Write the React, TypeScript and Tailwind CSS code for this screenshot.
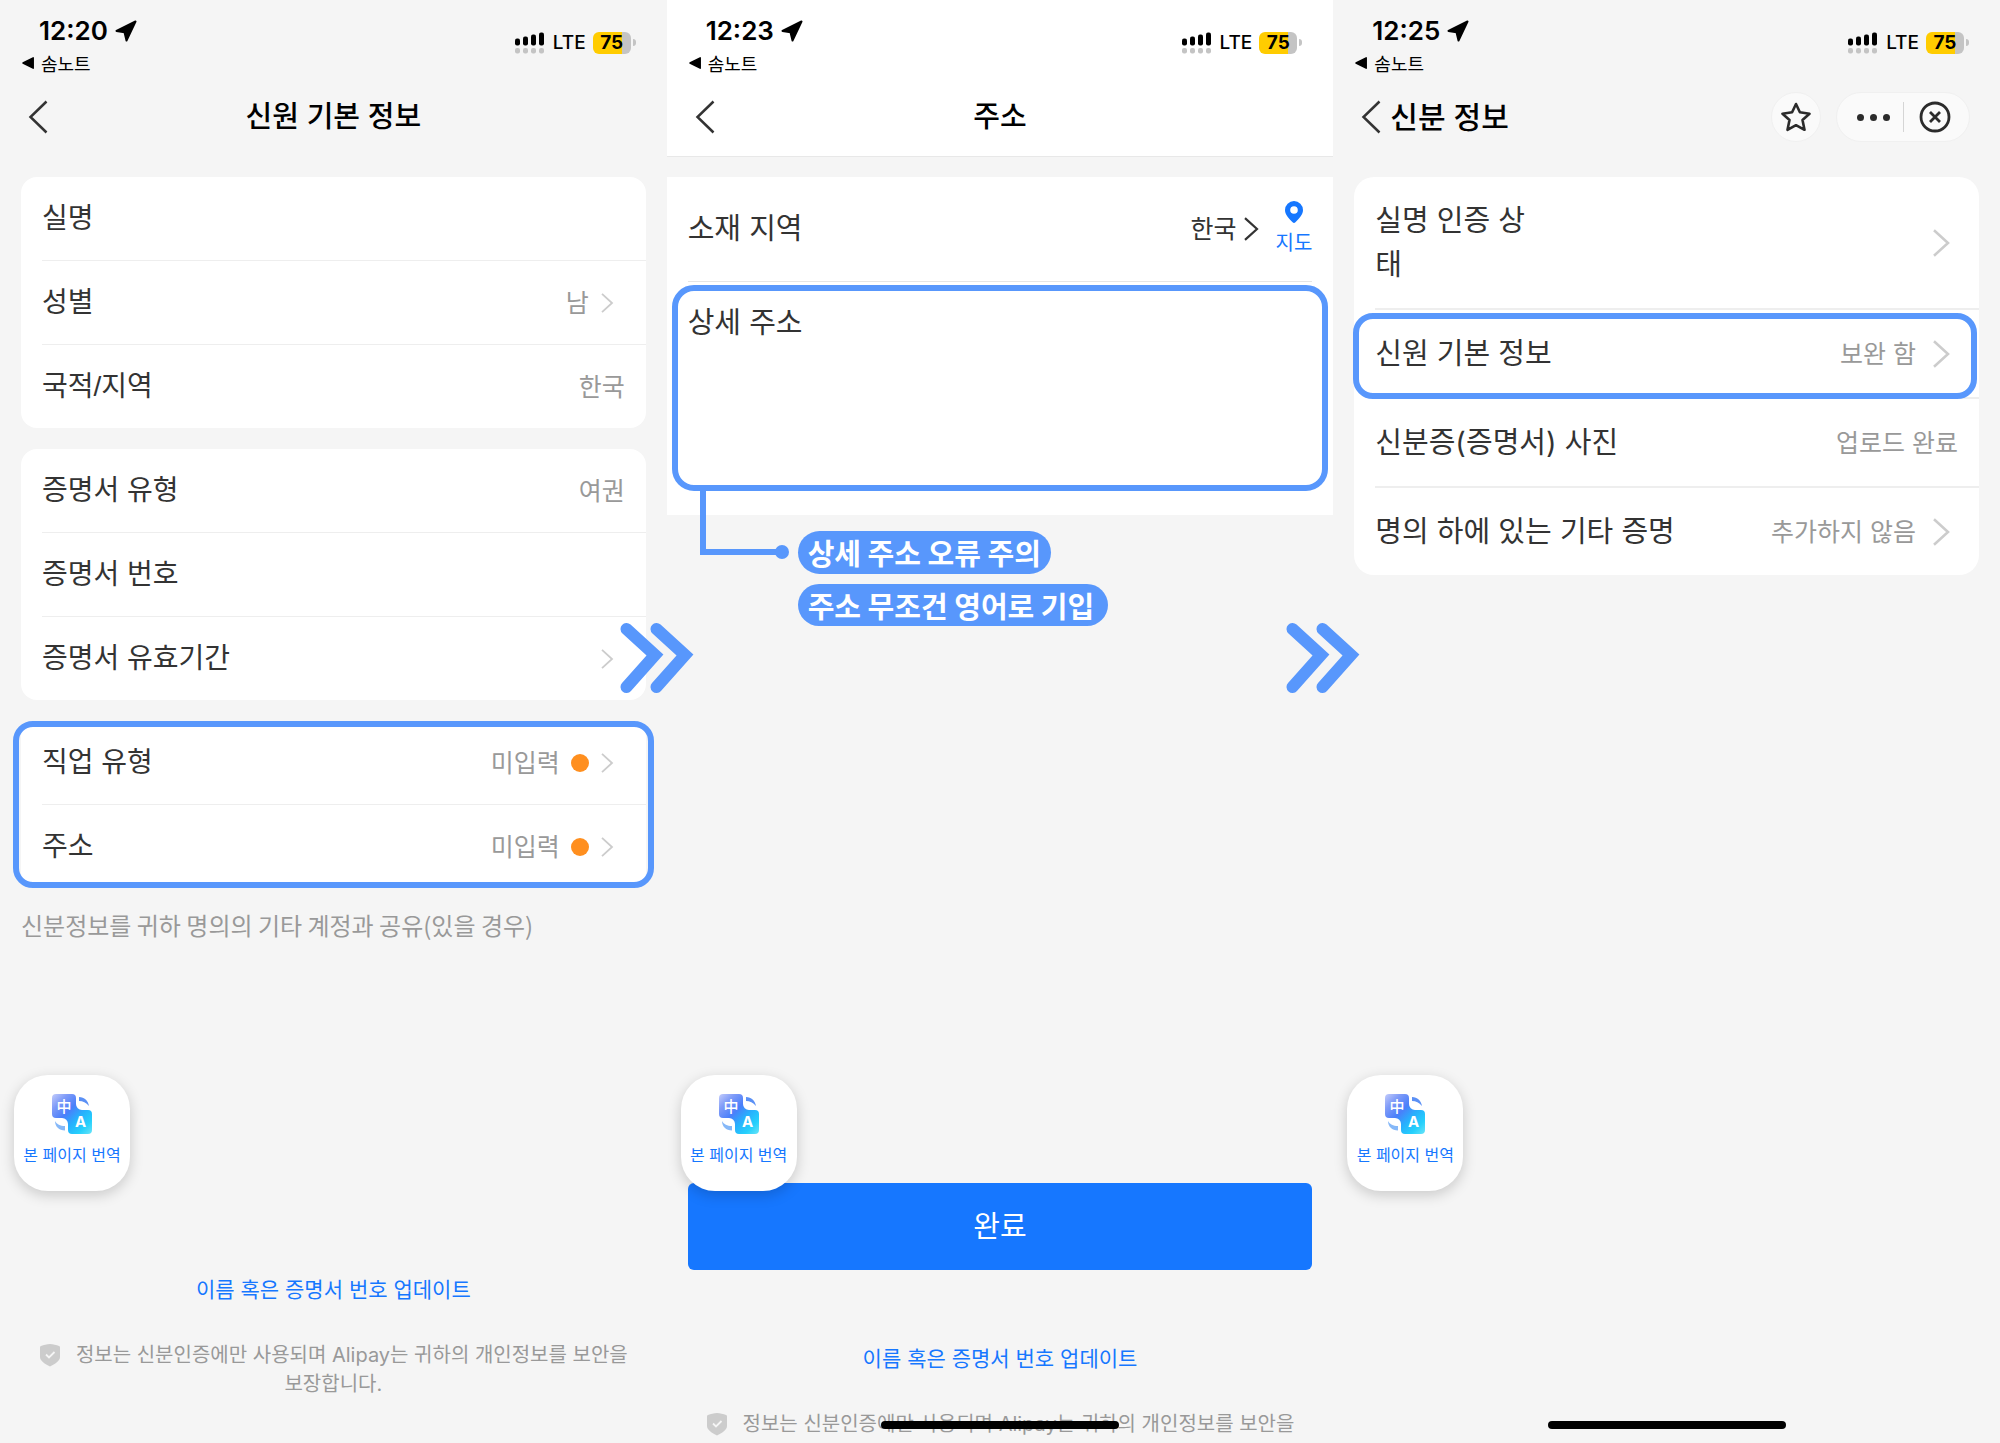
import React from "react";

const KR = "font-['Noto_Sans_CJK_KR',sans-serif]";
const SF = "font-['Inter','Noto_Sans_CJK_KR',sans-serif]";
const LABEL = "font-['Liberation_Sans','Noto_Sans_CJK_KR',sans-serif]";

function StatusBar({ time }: { time: string }) {
  return (
    <div className="flex h-[78px] items-start justify-between pr-[31px] pl-[21px] text-black">
      <div className="flex flex-col">
        <div className="mt-[15px] flex items-center gap-[7px] pl-[18px]">
          <span className="text-[26px] leading-8 font-semibold">{time}</span>
          <svg className="h-[22px] w-[22px]" viewBox="0 0 22 22" fill="currentColor" stroke="currentColor" strokeWidth="2" strokeLinejoin="round">
            <path d="M20.5 1.5 11.5 20.5 9.5 12.2 1.5 11Z" />
          </svg>
        </div>
        <button type="button" className="flex items-center gap-[6px]">
          <svg className="h-[14px] w-[14px]" viewBox="0 0 14 14" fill="currentColor" stroke="currentColor" strokeWidth="1.5" strokeLinejoin="round">
            <path d="M12.2 1.8v10.4L2 7Z" />
          </svg>
          <span className={`text-[18px] leading-8 ${KR}`}>솜노트</span>
        </button>
      </div>
      <div className="mt-[31px] flex h-[23px] items-center">
        <svg className="mr-2 h-[22px] w-[30px]" viewBox="0 0 30 22" aria-hidden="true">
          <g fill="#000">
            <rect x="0" y="6.500" width="5" height="7" rx="2" />
            <rect x="8" y="4.500" width="5" height="9" rx="2" />
            <rect x="16" y="2.500" width="5" height="11" rx="2" />
            <rect x="24" y="0.500" width="5" height="13" rx="2" />
          </g>
          <g fill="#c4c4c4">
            <rect x="0" y="16" width="5" height="5.500" rx="2" />
            <rect x="8" y="16" width="5" height="5.500" rx="2" />
            <rect x="16" y="16" width="5" height="5.500" rx="2" />
            <rect x="24" y="16" width="5" height="5.500" rx="2" />
          </g>
        </svg>
        <span className="mr-[7px] text-[19px] leading-6 font-medium">LTE</span>
        <span className="flex h-[22px] w-[38px] items-center justify-center rounded-[6px] bg-linear-to-r from-[#ffcc00] from-77% to-[#c4c4c4] to-77% text-[19px] leading-none font-bold">
          75
        </span>
        <span className="ml-[2px] h-[7px] w-[3px] rounded-r-full bg-[#c4c4c4]" />
      </div>
    </div>
  );
}

function BackButton() {
  return (
    <button type="button" aria-label="뒤로" className="flex items-center">
      <svg className="h-[34px] w-5" viewBox="0 0 20 34" fill="none" stroke="#333" strokeWidth="2.500">
        <path d="M18.500 1.500 2.500 17l16 15.500" />
      </svg>
    </button>
  );
}

function NavBar({ title }: { title: string }) {
  return (
    <header className="grid h-[78px] grid-cols-[1fr_auto_1fr] items-center px-7">
      <BackButton />
      <h1 className="text-[29px] leading-10 font-medium text-black">{title}</h1>
      <span />
    </header>
  );
}

function Chevron({ className }: { className: string }) {
  return (
    <svg className={className} viewBox="0 0 14 22" fill="none" stroke="currentColor" strokeWidth="2">
      <path d="M1.500 1 12.500 11 1.500 21" />
    </svg>
  );
}

function Card({ children, highlighted = false }: { children: React.ReactNode; highlighted?: boolean }) {
  return (
    <section className="relative rounded-2xl bg-white">
      {children}
      {highlighted && (
        <div className="pointer-events-none absolute -inset-x-2 inset-y-0 rounded-[20px] border-[6px] border-[#5897fc]" />
      )}
    </section>
  );
}

type RowProps = { label: string; value?: string; alert?: boolean; link?: boolean; last?: boolean };

function Row({ label, value, alert, link, last }: RowProps) {
  const Tag = link ? "button" : "div";
  return (
    <Tag
      className={`ml-[21px] flex w-[calc(100%-21px)] items-center justify-between pr-[21px] text-left ${
        last ? "h-[83px]" : "h-[84px] border-b border-[#eee]"
      }`}
    >
      <span className={`text-[28px] leading-10 text-[#333] ${LABEL}`}>{label}</span>
      <span className="flex items-center">
        {value && <span className="text-[25px] leading-9 text-[#999]">{value}</span>}
        {alert && <span className="ml-[11px] h-[18px] w-[18px] rounded-full bg-[#ff8f1f]" />}
        {link && <Chevron className="mr-[11px] ml-[11px] h-5 w-[14px] text-[#ccc]" />}
      </span>
    </Tag>
  );
}

function TranslateWidget() {
  return (
    <button
      type="button"
      className="absolute bottom-[252px] left-[14px] flex h-[116px] w-[116px] flex-col items-center rounded-[34px] bg-white pt-[19px] shadow-[0_4px_14px_rgba(0,0,0,0.18)]"
    >
      <svg className="h-10 w-10" viewBox="0 0 40 40" aria-hidden="true">
        <defs>
          <linearGradient id="tile" x1="0" y1="0" x2="1" y2="1">
            <stop offset="0" stopColor="#c3ccfb" />
            <stop offset="0.200" stopColor="#7f9bf8" />
            <stop offset="0.420" stopColor="#4a7ffa" />
            <stop offset="0.620" stopColor="#27b0fd" />
            <stop offset="0.820" stopColor="#25d0fc" />
            <stop offset="1" stopColor="#6be4f8" />
          </linearGradient>
        </defs>
        <path
          fill="url(#tile)"
          d="M4 0h16a4 4 0 0 1 4 4v6a6 6 0 0 0 6 6h6a4 4 0 0 1 4 4v16a4 4 0 0 1-4 4H20a4 4 0 0 1-4-4v-6a6 6 0 0 0-6-6H4a4 4 0 0 1-4-4V4a4 4 0 0 1 4-4Z"
        />
        <path fill="#5b90f5" d="M27 3c5.500 0 9 3.500 10 9-3-3.500-6-5-10-5Z" />
        <path fill="#86b8f8" d="M3 27c0 5.500 4 9.500 10 9.500V32c-5 0-8-1.500-10-5Z" />
        <text x="12" y="17.500" textAnchor="middle" fill="#fff" fontSize="15" fontWeight="500" fontFamily="Noto Sans CJK SC, sans-serif">
          中
        </text>
        <text x="28.500" y="33" textAnchor="middle" fill="#fff" fontSize="15" fontWeight="700" fontFamily="Inter, sans-serif">
          A
        </text>
      </svg>
      <span className="mt-[9px] text-base leading-6 whitespace-nowrap text-[#1677ff]">본 페이지 번역</span>
    </button>
  );
}

function UpdateLink() {
  return (
    <a href="#update" className="self-center text-[21px] leading-[30px] text-[#1677ff]">
      이름 혹은 증명서 번호 업데이트
    </a>
  );
}

function PrivacyNote({ children }: { children: React.ReactNode }) {
  return (
    <p className="px-6 text-center text-[20px] leading-[29px] break-keep text-[#999]">
      <svg className="mr-[15px] inline-block h-6 w-[22px] align-[-5px]" viewBox="0 0 22 24" aria-hidden="true">
        <path fill="#ccc" d="M11 1c3 0 6.500 1 9 2a1.500 1.500 0 0 1 1 1.500V14c0 4-5 7-10 9.500C6 21 1 18 1 14V4.500A1.500 1.500 0 0 1 2 3c2.500-1 6-2 9-2Z" />
        <path d="m7 11.500 3 3 5.500-5.500" fill="none" stroke="#f5f5f5" strokeWidth="1.800" />
      </svg>
      {children}
    </p>
  );
}

function HomeIndicator() {
  return <div className="absolute bottom-[14px] left-1/2 h-2 w-[238px] -translate-x-1/2 rounded-full bg-black" />;
}

function StepArrow() {
  return (
    <svg
      className="pointer-events-none absolute top-[622px] right-[-27px] z-10 h-[72px] w-[75px]"
      viewBox="0 0 75 72"
      fill="none"
      stroke="#5897fc"
      strokeWidth="12"
      strokeLinecap="round"
      aria-hidden="true"
    >
      <path d="M7.500 7 36 33 7.500 65" />
      <path d="M37.500 7 66 33 37.500 65" />
    </svg>
  );
}

function BasicInfoScreen() {
  return (
    <main className="relative flex h-screen flex-col">
      <StatusBar time="12:20" />
      <NavBar title="신원 기본 정보" />
      <div className="mt-[21px] flex flex-col gap-[21px] px-[21px]">
        <Card>
          <Row label="실명" />
          <Row label="성별" value="남" link />
          <Row label="국적/지역" value="한국" last />
        </Card>
        <Card>
          <Row label="증명서 유형" value="여권" />
          <Row label="증명서 번호" />
          <Row label="증명서 유효기간" link last />
        </Card>
        <Card highlighted>
          <Row label="직업 유형" value="미입력" alert link />
          <Row label="주소" value="미입력" alert link last />
        </Card>
        <p className={`text-[24px] leading-8 whitespace-nowrap text-[#999] ${KR}`}>
          신분정보를 귀하 명의의 기타 계정과 공유(있을 경우)
        </p>
      </div>
      <div className="mt-auto flex flex-col gap-9 pb-11">
        <UpdateLink />
        <PrivacyNote>정보는 신분인증에만 사용되며 Alipay는 귀하의 개인정보를 보안을 보장합니다.</PrivacyNote>
      </div>
      <TranslateWidget />
      <StepArrow />
    </main>
  );
}

function AddressScreen() {
  return (
    <main className="relative flex h-screen flex-col">
      <div className="border-b border-[#e8e8e8] bg-white">
        <StatusBar time="12:23" />
        <NavBar title="주소" />
      </div>
      <form className="relative mt-5 flex flex-col bg-white pb-6">
        <div className="mx-[21px] flex h-[105px] items-center justify-between border-b border-[#e5e5e5]">
          <span className="text-[29px] leading-10 text-[#333]">소재 지역</span>
          <div className="flex items-center gap-[17px]">
            <button type="button" className="flex items-center gap-[6px] text-[#333]">
              <span className="text-[25px] leading-9">한국</span>
              <Chevron className="h-6 w-4" />
            </button>
            <button type="button" className="flex flex-col items-center text-[#1677ff]">
              <svg className="h-[22px] w-[18px]" viewBox="0 0 18 22" fill="currentColor" aria-hidden="true">
                <path
                  fillRule="evenodd"
                  d="M9 0a9 9 0 0 1 9 9c0 4.500-3.500 8-7.600 12.200a2 2 0 0 1-2.800 0C3.500 17 0 13.500 0 9a9 9 0 0 1 9-9Zm0 5.200a3.800 3.800 0 1 0 0 7.600 3.800 3.800 0 0 0 0-7.600Z"
                />
              </svg>
              <span className="mt-[6px] text-[20px] leading-7">지도</span>
            </button>
          </div>
        </div>
        <div className="mx-[5px] mt-[3px] flex h-[206px] flex-col rounded-[22px] border-[6px] border-[#5897fc] px-[10px] pt-3">
          <label htmlFor="address" className="text-[29px] leading-10 text-[#333]">
            상세 주소
          </label>
          <textarea id="address" className="min-h-0 flex-1 resize-none text-[25px] outline-none" />
        </div>
      </form>
      <div className={`relative mt-4 flex flex-col items-start gap-[10px] pl-[131px] text-[29px] font-bold text-white ${KR}`}>
        <svg className="absolute -top-10 left-8 h-[72px] w-[91px]" viewBox="0 0 91 72" aria-hidden="true">
          <path d="M4 0v61h78" fill="none" stroke="#5897fc" strokeWidth="6" />
          <circle cx="83" cy="61" r="7" fill="#5897fc" />
        </svg>
        <p className="rounded-full bg-[#5897fc] px-[10px] leading-[43px]">상세 주소 오류 주의</p>
        <p className="rounded-full bg-[#5897fc] pr-[14px] pl-[10px] leading-[42px]">주소 무조건 영어로 기입</p>
      </div>
      <div className="mt-auto flex flex-col gap-9 pb-1">
        <button type="button" className="mx-[21px] mb-[38px] h-[87px] rounded-md bg-[#1677ff] text-[29px] text-white">
          완료
        </button>
        <UpdateLink />
        <PrivacyNote>정보는 신분인증에만 사용되며 Alipay는 귀하의 개인정보를 보안을</PrivacyNote>
      </div>
      <TranslateWidget />
      <HomeIndicator />
      <StepArrow />
    </main>
  );
}

type IdentityRowProps = { label: string; value?: string; link?: boolean; highlighted?: boolean; last?: boolean; tall?: boolean };

function IdentityRow({ label, value, link, highlighted, last, tall }: IdentityRowProps) {
  const Tag = link ? "button" : "div";
  return (
    <div className="relative pl-[21px]">
      <Tag
        className={`flex w-full items-center justify-between pr-[21px] text-left ${tall ? "h-[133px]" : last ? "h-[87px]" : "h-[89px]"} ${
          last ? "" : "border-b-2 border-[#eee]"
        }`}
      >
        <span className={`text-[29px] leading-[44px] text-[#333] ${tall ? "w-[165px] break-all" : ""}`}>{label}</span>
        <span className="flex items-center">
          {value && <span className="text-[25px] leading-9 text-[#999]">{value}</span>}
          {link && <Chevron className="mr-2 ml-4 h-[28px] w-[18px] text-[#ccc]" />}
        </span>
      </Tag>
      {highlighted && (
        <div className="pointer-events-none absolute -left-px top-[3px] right-[2px] bottom-0 rounded-[20px] border-[6px] border-[#5897fc]" />
      )}
    </div>
  );
}

function IdentityScreen() {
  return (
    <main className="relative flex h-screen flex-col">
      <StatusBar time="12:25" />
      <header className="flex h-[78px] items-center justify-between pr-[30px] pl-7">
        <div className="flex items-center gap-[9px]">
          <BackButton />
          <h1 className="text-[30px] leading-10 font-medium text-black">신분 정보</h1>
        </div>
        <div className="flex items-center gap-[15px]">
          <button type="button" aria-label="즐겨찾기" className="flex h-[50px] w-[50px] items-center justify-center rounded-full border border-[#f0f0f0] bg-[#fafafa]">
            <svg className="h-[30px] w-[30px]" viewBox="0 0 30 30" fill="none" stroke="#2b2b2b" strokeWidth="2.600" strokeLinejoin="round">
              <path d="M15 2 18.900 10.200 28.500 11.700 21.500 18 23.500 27.800 15 23.200 6.500 27.800 8.500 18 1.500 11.700 11.100 10.200Z" />
            </svg>
          </button>
          <div className="flex h-[50px] w-[134px] items-center rounded-full border border-[#f0f0f0] bg-[#fafafa]">
            <button type="button" aria-label="더보기" className="flex h-[30px] w-[67px] items-center justify-center gap-[6px] border-r border-[#d5d5d5] pl-[6px]">
              <span className="h-[7px] w-[7px] rounded-full bg-[#2b2b2b]" />
              <span className="h-[7px] w-[7px] rounded-full bg-[#2b2b2b]" />
              <span className="h-[7px] w-[7px] rounded-full bg-[#2b2b2b]" />
            </button>
            <button type="button" aria-label="닫기" className="flex flex-1 items-center justify-center pr-1">
              <svg className="h-8 w-8" viewBox="0 0 32 32" fill="none" stroke="#2b2b2b" strokeWidth="2.800">
                <circle cx="16" cy="16" r="14" />
                <path d="m11 11 10 10M21 11 11 21" />
              </svg>
            </button>
          </div>
        </div>
      </header>
      <section className="mx-[21px] mt-[21px] rounded-[20px] bg-white">
        <IdentityRow label="실명 인증 상태" link tall />
        <IdentityRow label="신원 기본 정보" value="보완 함" link highlighted />
        <IdentityRow label="신분증(증명서) 사진" value="업로드 완료" />
        <IdentityRow label="명의 하에 있는 기타 증명" value="추가하지 않음" link last />
      </section>
      <TranslateWidget />
      <HomeIndicator />
    </main>
  );
}

export default function App() {
  return (
    <div className={`grid h-screen grid-cols-3 overflow-hidden bg-[#f5f5f5] ${SF}`}>
      <BasicInfoScreen />
      <AddressScreen />
      <IdentityScreen />
    </div>
  );
}
